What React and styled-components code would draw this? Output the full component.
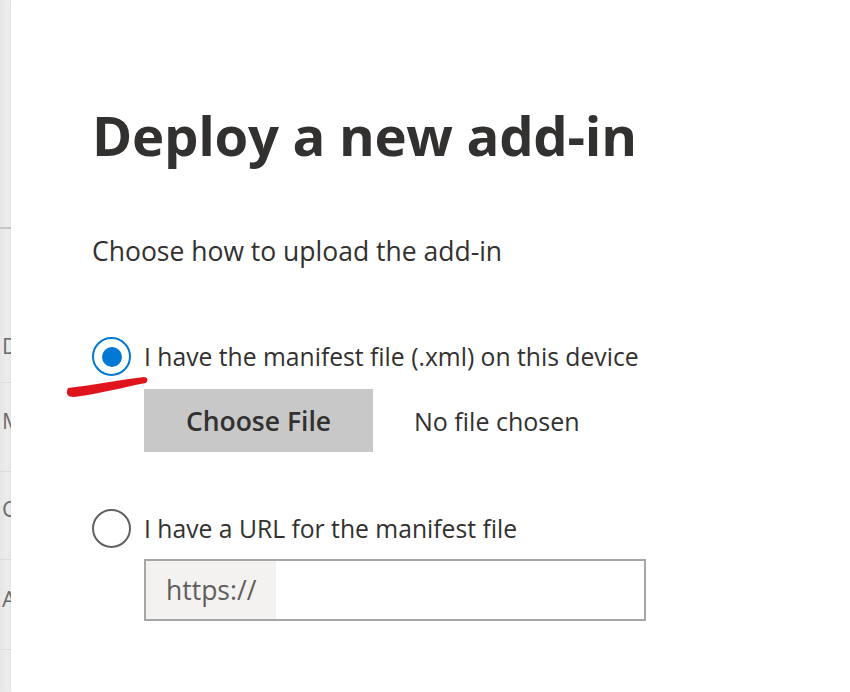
import React from "react";
import styled, { createGlobalStyle } from "styled-components";

const Global = createGlobalStyle`
  html, body {
    margin: 0;
    padding: 0;
    background: #fff;
  }
  body {
    font-family: "Open Sans", "Noto Sans", sans-serif;
    color: #323130;
  }
`;

const Page = styled.div`
  display: flex;
  width: 850px;
  height: 692px;
  overflow: hidden;
  position: relative;
`;

const Side = styled.div`
  width: 11px;
  flex-shrink: 0;
  overflow: hidden;
  background: linear-gradient(to right, #e6e6e6, #efefef);
  display: flex;
  flex-direction: column;
`;

const SideTop = styled.div`
  height: 227px;
  flex-shrink: 0;
  border-bottom: 2px solid #c8c8c8;
`;

const SideItem = styled.div`
  height: ${(p) => p.h}px;
  flex-shrink: 0;
  border-bottom: 1px solid #dcdcdc;
  display: flex;
  align-items: flex-end;
  padding: 0 0 ${(p) => p.pb}px 2px;
  box-sizing: border-box;
  font-size: 22px;
  color: #6b6b6b;
  white-space: nowrap;
`;

const Panel = styled.div`
  flex: 1;
  background: #fff;
  padding: 92px 0 0 81px;
  box-shadow: -1px 0 3px rgba(0, 0, 0, 0.06);
`;

const Title = styled.h1`
  margin: 0;
  font-size: 54.5px;
  font-weight: 700;
  color: #323130;
  letter-spacing: -0.3px;
  line-height: 86px;
`;

const Lead = styled.div`
  margin-top: 57px;
  font-size: 26.5px;
  line-height: 32px;
  color: #323130;
`;

const Option = styled.div`
  margin-top: ${(p) => p.mt}px;
  display: grid;
  grid-template-columns: 52px auto;
  row-gap: ${(p) => p.gap}px;
`;

const Radio = styled.span`
  width: 39px;
  height: 39px;
  box-sizing: border-box;
  border-radius: 50%;
  border: 2px solid ${(p) => (p.checked ? "#0078d4" : "#616161")};
  display: flex;
  align-items: center;
  justify-content: center;
  &::after {
    content: "";
    display: ${(p) => (p.checked ? "block" : "none")};
    width: 20px;
    height: 20px;
    border-radius: 50%;
    background: #0078d4;
  }
`;

const Label = styled.span`
  font-size: 24.7px;
  line-height: 39px;
  color: #323130;
`;

const FileRow = styled.div`
  grid-column: 2;
  display: flex;
  align-items: center;
  gap: 41px;
`;

const FileButton = styled.button`
  width: 229px;
  height: 63px;
  border: none;
  background: #c8c8c8;
  font-family: inherit;
  font-size: 26.5px;
  font-weight: 600;
  color: #323130;
  padding: 0;
`;

const NoFile = styled.span`
  font-size: 25px;
  color: #323130;
`;

const UrlBox = styled.div`
  grid-column: 2;
  width: 502px;
  height: 62px;
  box-sizing: border-box;
  border: 2px solid #a6a6a6;
  display: flex;
`;

const Prefix = styled.span`
  width: 130px;
  background: #f3f2f1;
  display: flex;
  align-items: center;
  padding-left: 20px;
  box-sizing: border-box;
  font-size: 26.5px;
  color: #605e5c;
`;

const UrlInput = styled.input`
  flex: 1;
  border: none;
  outline: none;
  background: #fff;
`;

const Mark = styled.svg`
  position: absolute;
  left: 64px;
  top: 372px;
  pointer-events: none;
`;

const sideRows = [
  { label: "Deploy", h: 154, pb: 22 },
  { label: "Manage", h: 89, pb: 36 },
  { label: "Configure", h: 88, pb: 36 },
  { label: "Add-ins", h: 90, pb: 36 },
  { label: "Tools", h: 88, pb: 0 },
];

export default function App() {
  return (
    <>
      <Global />
      <Page>
        <Side>
          <SideTop />
          {sideRows.map((r) => (
            <SideItem key={r.label} h={r.h} pb={r.pb}>
              {r.label}
            </SideItem>
          ))}
        </Side>
        <Panel>
          <Title>Deploy a new add-in</Title>
          <Lead>Choose how to upload the add-in</Lead>
          <Option mt={70} gap={13}>
            <Radio checked />
            <Label>I have the manifest file (.xml) on this device</Label>
            <FileRow>
              <FileButton>Choose File</FileButton>
              <NoFile>No file chosen</NoFile>
            </FileRow>
          </Option>
          <Option mt={57} gap={11}>
            <Radio />
            <Label>I have a URL for the manifest file</Label>
            <UrlBox>
              <Prefix>https://</Prefix>
              <UrlInput />
            </UrlBox>
          </Option>
        </Panel>
        <Mark width="86" height="28" viewBox="0 0 86 28">
          <path
            d="M4 16 C 30 13, 55 8, 80 5 Q 86 6, 82 11 C 60 15, 40 21, 10 25 Q 0 25, 4 16 Z"
            fill="#e0141c"
          />
        </Mark>
      </Page>
    </>
  );
}
